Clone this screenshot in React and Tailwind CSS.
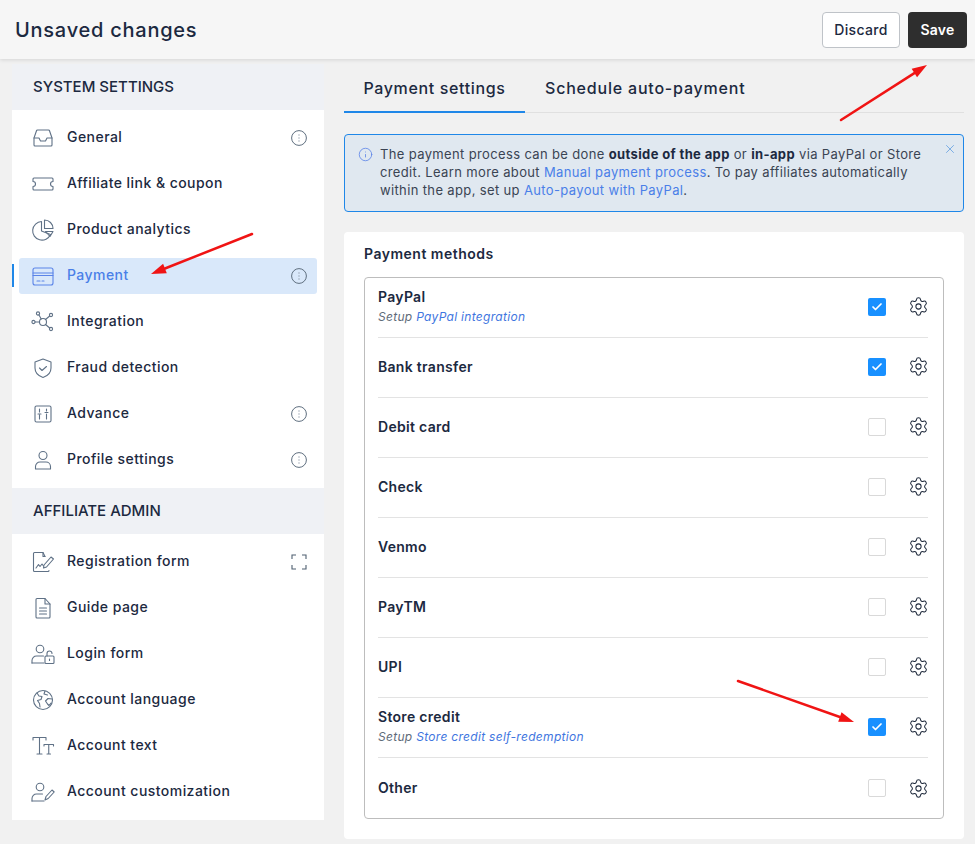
import { Check, Info, Settings, X } from "lucide-react";

const iconStroke = "#5f7186";

function Glyph({ children, color = iconStroke }) {
  return (
    <svg viewBox="0 0 24 24" fill="none" stroke={color} strokeWidth="1.1" strokeLinecap="round" strokeLinejoin="round" className="h-6 w-6 shrink-0">
      {children}
    </svg>
  );
}

const icons = {
  general: (
    <>
      <path d="M6.500 4h11a1 1 0 0 1 1 .8L21 12v7a1 1 0 0 1-1 1H4a1 1 0 0 1-1-1v-7l2.500-7.200a1 1 0 0 1 1-.8z" />
      <path d="M3 12h5l1.500 3h5l1.500-3h5" />
    </>
  ),
  coupon: <path d="M3 6h18a1 1 0 0 1 1 1v2.500a2.500 2.500 0 0 0 0 5V17a1 1 0 0 1-1 1H3a1 1 0 0 1-1-1v-2.500a2.500 2.500 0 0 0 0-5V7a1 1 0 0 1 1-1z" />,
  analytics: (
    <>
      <path d="M10.500 3.500a9.300 9.300 0 1 0 9 13l-9-3.500z" />
      <path d="M13.500 2v8.500H22A8.500 8.500 0 0 0 13.500 2z" />
      <path d="M14.500 13.500H22l-3 5z" />
    </>
  ),
  payment: (
    <>
      <rect x="2" y="4" width="20" height="17" rx="2" />
      <path d="M2 9h20M2 11.500h20M6 17h3M11 17h2" />
    </>
  ),
  integration: (
    <>
      <circle cx="12" cy="12" r="3.500" />
      <circle cx="7" cy="3.500" r="1.600" />
      <circle cx="20" cy="5" r="1.600" />
      <circle cx="2.500" cy="12" r="1.600" />
      <circle cx="20" cy="19" r="1.600" />
      <path d="M8 5l2.200 4M18.700 6l-4.200 3.500M4 12h4.500M18.700 18l-4.200-3.500" />
    </>
  ),
  fraud: (
    <>
      <path d="M12 3l8 3v6c0 5-3.500 8-8 9.500-4.500-1.500-8-4.500-8-9.500V6z" />
      <path d="M8.500 12l2.500 2.500 4.500-4" />
    </>
  ),
  advance: (
    <>
      <rect x="4" y="4" width="16" height="16" rx="1.500" />
      <path d="M8.500 7v3M8.500 13v4M7 12h3M15.500 7v2M15.500 12v5M14 10.500h3" />
    </>
  ),
  profile: (
    <>
      <circle cx="12" cy="7.500" r="4" />
      <path d="M4.500 21v-2.500a4.500 4.500 0 0 1 4.500-4.500h6a4.500 4.500 0 0 1 4.500 4.500V21z" />
    </>
  ),
  registration: (
    <>
      <path d="M18 20.500a1 1 0 0 1-1 1H3.500a1 1 0 0 1-1-1v-17a1 1 0 0 1 1-1H12l2 4" />
      <path d="M12 2.500v4h2" />
      <path d="M5 18l2.500-3.500 1.500 2 2-2.500 1.500 2" />
      <path d="M13 15l7-8 2.500 2-7 8-3 1z" />
    </>
  ),
  guide: (
    <>
      <path d="M6 2.500h8l5 5.500v13a1 1 0 0 1-1 1H6a1 1 0 0 1-1-1V3.500a1 1 0 0 1 1-1z" />
      <path d="M14 2.500V8h5M8.500 12h7M8.500 15h7M8.500 18h7" />
    </>
  ),
  login: (
    <>
      <circle cx="9" cy="7" r="3.800" />
      <path d="M1 21v-2.500A4.500 4.500 0 0 1 5.500 14h7" />
      <path d="M1 21h12" />
      <rect x="14" y="14" width="9" height="7.500" rx="1" />
      <path d="M16 14v-2.500a2.500 2.500 0 0 1 5 0M18.500 17v1.500" />
    </>
  ),
  language: (
    <>
      <circle cx="12" cy="12" r="9.500" />
      <path d="M6 5l2 3 3 .5-1 3-3.500 1 2 3 .5 3.500M14 3l-1 3 3.500 1M21 11l-4-.5-2.500 2.500 2 3 1.500 1.500 2-2.500" />
    </>
  ),
  text: (
    <>
      <path d="M2 6V3.500h13V6M8.500 3.500V20M6 20h5" />
      <path d="M13 12v-1.500h9.500V12M17.750 10.500V20M16 20h3.500" />
    </>
  ),
  customization: (
    <>
      <circle cx="9" cy="7" r="3.800" />
      <path d="M1 21v-2.500A4.500 4.500 0 0 1 5.500 14h6" />
      <path d="M1 21h12" />
      <path d="M14 20l1-3.500 6-6.500 2.200 2-6 6.500z" />
    </>
  ),
};

const systemItems = [
  { label: "General", icon: "general", tip: true },
  { label: "Affiliate link & coupon", icon: "coupon" },
  { label: "Product analytics", icon: "analytics" },
  { label: "Payment", icon: "payment", tip: true, active: true },
  { label: "Integration", icon: "integration" },
  { label: "Fraud detection", icon: "fraud" },
  { label: "Advance", icon: "advance", tip: true },
  { label: "Profile settings", icon: "profile", tip: true },
];

const adminItems = [
  { label: "Registration form", icon: "registration", expand: true },
  { label: "Guide page", icon: "guide" },
  { label: "Login form", icon: "login" },
  { label: "Account language", icon: "language" },
  { label: "Account text", icon: "text" },
  { label: "Account customization", icon: "customization" },
];

const methods = [
  { name: "PayPal", checked: true, setup: "PayPal integration" },
  { name: "Bank transfer", checked: true },
  { name: "Debit card" },
  { name: "Check" },
  { name: "Venmo" },
  { name: "PayTM" },
  { name: "UPI" },
  { name: "Store credit", checked: true, setup: "Store credit self-redemption" },
  { name: "Other" },
];

function DotsInfo() {
  return (
    <svg viewBox="0 0 16 16" fill="none" className="h-4 w-4">
      <circle cx="8" cy="8" r="7.400" stroke="#5f6f7f" strokeWidth="1" />
      <path d="M8 4.500v1M8 7.500v1M8 10.500v1" stroke="#8a97a5" strokeWidth="1.300" />
    </svg>
  );
}

function ExpandIcon() {
  return (
    <svg viewBox="0 0 16 16" fill="none" stroke="#4f5f70" strokeWidth="1.100" className="h-4 w-4">
      <path d="M1 5V1h4M11 1h4v4M15 11v4h-4M5 15H1v-4" />
    </svg>
  );
}

function NavItem({ item }) {
  return (
    <div className="relative flex h-[46px] items-center pt-[2px]">
      {item.active && <span className="absolute left-0 top-[12px] h-[23px] w-[2px] bg-[#1f87e8]" />}
      <div className={`mx-[7px] flex h-9 w-full items-center rounded-[3px] pl-[12px] pr-[10px] ${item.active ? "bg-[#d9e8fa]" : ""}`}>
        <Glyph color={item.active ? "#5b84e8" : iconStroke}>{icons[item.icon]}</Glyph>
        <span className={`ml-[12px] flex-1 pb-[4px] text-[14px] font-[450] tracking-[0.45px] ${item.active ? "text-[#4a7fe8]" : "text-[#1c2940]"}`}>
          {item.label}
        </span>
        {item.tip && <DotsInfo />}
        {item.expand && <ExpandIcon />}
      </div>
    </div>
  );
}

function SectionTitle({ children }) {
  return (
    <div className="flex h-[46px] items-center bg-[#eff1f5] pl-[21px] text-[15px] font-[450] text-[#1c2940]">
      {children}
    </div>
  );
}

function MethodRow({ method }) {
  return (
    <div className="flex h-[60px] items-center border-b border-[#e3e3e3] last:border-b-0 last:pt-[2px]">
      <div className="flex-1 pb-[2px]">
        <div className="text-[14px] font-semibold leading-[20px] tracking-[0.3px] text-[#1c2940]">{method.name}</div>
        {method.setup && (
          <div className="text-[12px] italic leading-[20px] tracking-[0.3px] text-[#5f6b7a]">
            Setup <a href="#" className="text-[#3f76e0]">{method.setup}</a>
          </div>
        )}
      </div>
      {method.checked ? (
        <span className="mb-[2px] flex h-[18px] w-[18px] items-center justify-center rounded-[2px] bg-[#1890ff]">
          <Check className="h-3 w-3 text-white" strokeWidth={3.500} />
        </span>
      ) : (
        <span className="mb-[2px] h-[18px] w-[18px] rounded-[2px] border border-[#d9d9d9] bg-white" />
      )}
      <Settings className="mb-[2px] ml-[22px] mr-[-1px] h-[21px] w-[21px] text-[#1f2a3c]" strokeWidth={1.150} />
    </div>
  );
}

function Arrow({ x1, y1, x2, y2 }) {
  // narrow head drawn back along the shaft
  const dx = x2 - x1;
  const dy = y2 - y1;
  const len = Math.hypot(dx, dy);
  const ux = dx / len;
  const uy = dy / len;
  const bx = x2 - ux * 15;
  const by = y2 - uy * 15;
  const head = `${x2},${y2} ${bx - uy * 5},${by + ux * 5} ${bx + uy * 5},${by - ux * 5}`;
  return (
    <>
      <line x1={x1} y1={y1} x2={bx} y2={by} stroke="#f01414" strokeWidth="2.500" strokeLinecap="round" />
      <polygon points={head} fill="#f01414" />
    </>
  );
}

export default function App() {
  return (
    <div className="relative h-[844px] w-[975px] overflow-hidden bg-[#f1f1f1] font-['Inter','Liberation_Sans',sans-serif]">
      <header className="flex h-[59px] items-center justify-between bg-[#f6f6f6] pl-[15px] pr-2 shadow-[0_1px_4px_rgba(0,0,0,0.12)]">
        <h1 className="text-[20px] font-[450] tracking-[0.75px] text-[#1c2940]">Unsaved changes</h1>
        <div className="flex gap-2">
          <button type="button" className="h-9 w-[78px] rounded-[4px] border border-[#bfc3c8] bg-white text-[14px] font-[450] tracking-[0.35px] text-[#1c2940]">
            Discard
          </button>
          <button type="button" className="h-9 w-[59px] rounded-[4px] bg-[#2e2e2e] text-[14px] font-semibold tracking-[0.2px] text-white">
            Save
          </button>
        </div>
      </header>

      <div className="flex items-start pl-3 pt-[5px]">
        <aside className="w-[312px] bg-white pb-[6px]">
          <SectionTitle>SYSTEM SETTINGS</SectionTitle>
          <nav className="pb-[6px] pt-1">
            {systemItems.map((item) => (
              <NavItem key={item.label} item={item} />
            ))}
          </nav>
          <SectionTitle>AFFILIATE ADMIN</SectionTitle>
          <nav className="pt-1">
            {adminItems.map((item) => (
              <NavItem key={item.label} item={item} />
            ))}
          </nav>
        </aside>

        <main className="ml-5 w-[620px]">
          <div className="flex h-[49px] border-b border-[#e0e0e0]">
            <div className="flex h-[49px] w-[181px] items-center justify-center border-b-2 border-[#1f87e8] text-[16px] font-[450] tracking-[0.65px] text-[#1c2940]">
              Payment settings
            </div>
            <div className="flex h-[48px] items-center pl-5 text-[16px] font-[450] tracking-[0.8px] text-[#1c2940]">Schedule auto-payment</div>
          </div>

          <div className="mt-[21px] flex h-[78px] rounded-[4px] border border-[#1f87e8] bg-[#e0e8f0] pl-[13px] pr-[6px] pt-[10px]">
            <Info className="mt-[2px] h-[15px] w-[15px] shrink-0 text-[#5b84e8]" strokeWidth={1.300} />
            <p className="ml-[7px] flex-1 whitespace-nowrap text-[13px] leading-[18px] tracking-[0.36px] text-[#3a4453]">
              The payment process can be done <b className="font-bold text-[#1c2940]">outside of the app</b> or{" "}
              <b className="font-bold text-[#1c2940]">in-app</b> via PayPal or Store
              <br />
              credit. Learn more about <a href="#" className="text-[#4a7fe8]">Manual payment process</a>. To pay affiliates automatically
              <br />
              within the app, set up <a href="#" className="text-[#4a7fe8]">Auto-payout with PayPal</a>.
            </p>
            <X className="mt-[-3px] h-[14px] w-[14px] shrink-0 text-[#5b9be0]" strokeWidth={1.300} />
          </div>

          <section className="mt-5 h-[607px] rounded-[4px] bg-white px-5 pt-[12px]">
            <h2 className="text-[14px] font-semibold leading-5 tracking-[0.5px] text-[#1c2940]">Payment methods</h2>
            <div className="mt-[13px] rounded-[4px] border border-[#bdbdbd] pl-[13px] pr-[15px]">
              {methods.map((method) => (
                <MethodRow key={method.name} method={method} />
              ))}
            </div>
          </section>
        </main>
      </div>

      {/* red annotation arrows laid over the page */}
      <svg viewBox="0 0 975 844" className="pointer-events-none absolute inset-0 h-[844px] w-[975px]">
        <Arrow x1={252} y1={234} x2={151} y2={274} />
        <Arrow x1={841} y1={120} x2={927} y2={65} />
        <Arrow x1={738} y1={681} x2={854} y2={722} />
      </svg>
    </div>
  );
}
